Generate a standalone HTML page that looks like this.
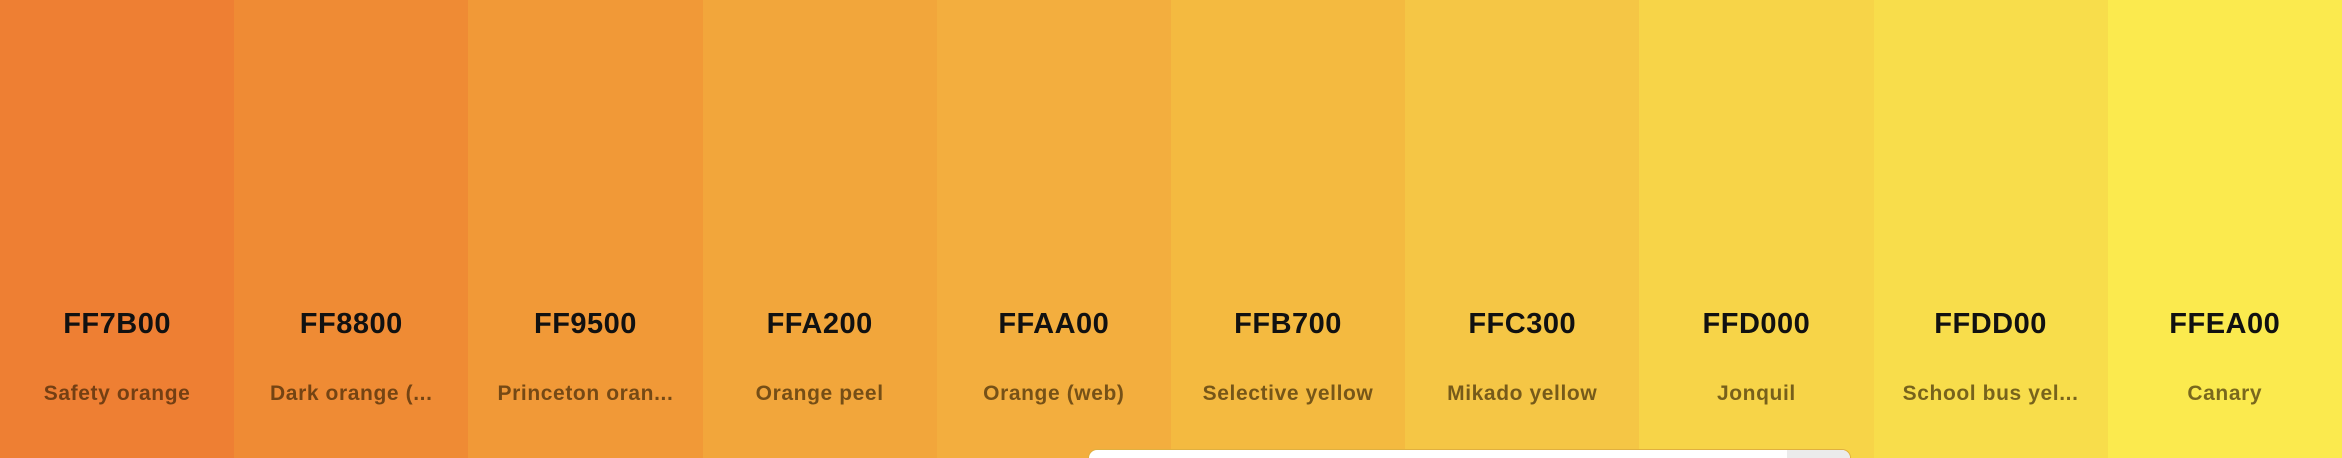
<!DOCTYPE html>
<html><head><meta charset="utf-8"><style>
html,body{margin:0;padding:0;width:2342px;height:458px;overflow:hidden;font-family:"Liberation Sans",sans-serif;position:relative}
.row{display:flex;width:2342px;height:458px}
.c{flex:0 0 234.2px;position:relative}
.h{position:absolute;left:0;right:0;top:308px;text-align:center;font-size:29px;font-weight:700;color:#111;letter-spacing:0.5px}
.n{position:absolute;left:0;right:0;top:382px;text-align:center;font-size:21px;font-weight:700;color:rgba(40,25,0,0.62);letter-spacing:0.6px}
.box{position:absolute;left:1088px;top:449px;width:763px;height:9px;background:#fff;border-radius:14px 14px 0 0;border:1px solid #e0b040;border-bottom:none;box-sizing:border-box;overflow:hidden}
.box i{position:absolute;right:0;top:0;width:63px;height:100%;background:#ebebeb}
</style></head><body>
<div class="row">
<div class="c" style="background:#EE7F33"><div class="h">FF7B00</div><div class="n">Safety orange</div></div>
<div class="c" style="background:#EF8B34"><div class="h">FF8800</div><div class="n">Dark orange (...</div></div>
<div class="c" style="background:#F19937"><div class="h">FF9500</div><div class="n">Princeton oran...</div></div>
<div class="c" style="background:#F2A63B"><div class="h">FFA200</div><div class="n">Orange peel</div></div>
<div class="c" style="background:#F3AE3E"><div class="h">FFAA00</div><div class="n">Orange (web)</div></div>
<div class="c" style="background:#F4BA40"><div class="h">FFB700</div><div class="n">Selective yellow</div></div>
<div class="c" style="background:#F5C645"><div class="h">FFC300</div><div class="n">Mikado yellow</div></div>
<div class="c" style="background:#F7D448"><div class="h">FFD000</div><div class="n">Jonquil</div></div>
<div class="c" style="background:#F8DD4B"><div class="h">FFDD00</div><div class="n">School bus yel...</div></div>
<div class="c" style="background:#FBEA4E"><div class="h">FFEA00</div><div class="n">Canary</div></div>
</div>
<div class="box"><i></i></div>
</body></html>
